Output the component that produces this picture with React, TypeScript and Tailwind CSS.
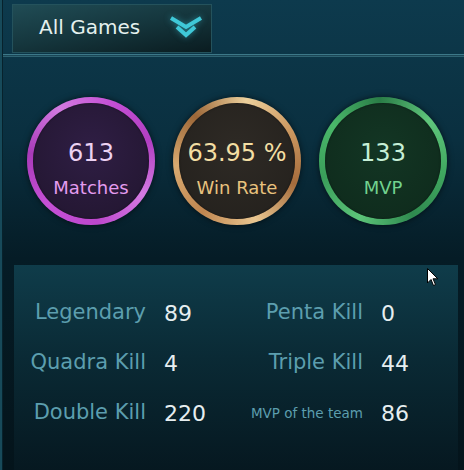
import React from "react";

const circles = [
  {
    value: "613",
    label: "Matches",
    ring: "bg-[conic-gradient(from_20deg,#c44fd4,#b23fc2,#d47ae2,#bc47cc,#c650d6,#a93ab9,#d27ae0,#c44fd4)]",
    fill: "bg-[radial-gradient(circle_at_50%_40%,#2f1e44,#21152e)]",
    num: "text-[#ecd2f2]",
    lab: "text-[#e49cef]",
  },
  {
    value: "63.95 %",
    label: "Win Rate",
    ring: "bg-[conic-gradient(from_60deg,#cc9860,#a56c3c,#e9c690,#c08650,#d9aa70,#9c6738,#ecd09c,#cc9860)]",
    fill: "bg-[radial-gradient(circle_at_50%_40%,#2e2a25,#23201c)]",
    num: "text-[#f3dea3]",
    lab: "text-[#e8c27e]",
  },
  {
    value: "133",
    label: "MVP",
    ring: "bg-[conic-gradient(from_100deg,#40a860,#2f8a4f,#5cc479,#3a9e5a,#4ab86a,#2a7d47,#60c67c,#40a860)]",
    fill: "bg-[radial-gradient(circle_at_50%_40%,#133624,#0e291b)]",
    num: "text-[#c6efd6]",
    lab: "text-[#72d28f]",
  },
];

const rows = [
  ["Legendary", "89", "Penta Kill", "0"],
  ["Quadra Kill", "4", "Triple Kill", "44"],
  ["Double Kill", "220", "MVP of the team", "86"],
];

function Chevron() {
  return (
    <svg width="34" height="22" viewBox="0 0 34 22" className="drop-shadow-[0_0_3px_rgba(60,200,220,0.5)]">
      <polyline points="2,2 17,11 32,2" fill="none" stroke="#3fc8d8" strokeWidth="4" strokeLinejoin="miter" />
      <polyline points="8,11 17,19 26,11" fill="none" stroke="#3fc8d8" strokeWidth="4" strokeLinejoin="miter" />
    </svg>
  );
}

export default function App() {
  return (
    <div className="relative w-[464px] h-[470px] overflow-hidden flex bg-[linear-gradient(180deg,#0d3a4d_0%,#0a2f3f_30%,#051c26_55%,#04141b_100%)] font-['DejaVu_Sans',sans-serif]">
      <div className="w-[3px] shrink-0 bg-[#174a5a] border-r border-[#07222c]" />

      <div className="flex-1 flex flex-col">
        {/* dropdown */}
        <div className="pl-[9px] pt-[4px]">
          <div className="w-[200px] h-[49px] flex items-center justify-between pl-[26px] pr-[8px] pb-[4px] border border-[#24525c] bg-[linear-gradient(170deg,#204c55_0%,#15363d_50%,#0a1c20_100%)]">
            <span className="text-[20px] leading-[24px] text-[#e4f0ee]">All Games</span>
            <Chevron />
          </div>
        </div>

        <div className="mt-[1px] h-[1px] bg-[#3c7888]" />
        <div className="h-[1px] bg-[#1b4656]" />
        <div className="h-[1px] bg-[#2e6372]" />

        {/* circles */}
        <div className="mt-[40px] pl-[24px] flex gap-[18px]">
          {circles.map((c) => (
            <div
              key={c.label}
              className={`w-[128px] h-[128px] rounded-full p-[6px] shadow-[0_0_6px_rgba(0,0,0,0.6)] ${c.ring}`}
            >
              <div className={`w-full h-full rounded-full flex flex-col items-center pt-[36px] shadow-[inset_0_0_2px_rgba(0,0,0,0.6)] ${c.fill}`}>
                <span className={`text-[24px] leading-[28px] ${c.num}`}>{c.value}</span>
                <span className={`mt-[10px] text-[18px] leading-[22px] ${c.lab}`}>{c.label}</span>
              </div>
            </div>
          ))}
        </div>

        {/* stats panel */}
        <div className="mt-[40px] ml-[11px] w-[444px] flex-1 pt-[23px] bg-[linear-gradient(180deg,#0f3c4a_0%,#0a2a35_45%,#061820_100%)]">
          {rows.map((r) => (
            <div key={r[0]} className="h-[50px] flex items-center">
              <div className="w-[222px] flex items-center">
                <span className="w-[132px] text-right text-[21px] text-[#5c9eae]">{r[0]}</span>
                <span className="ml-[18px] text-[22px] text-[#e6eef0]">{r[1]}</span>
              </div>
              <div className="flex items-center">
                <span
                  className={`w-[127px] text-right text-[#5c9eae] ${
                    r[2] === "MVP of the team" ? "text-[13.5px]" : "text-[21px]"
                  }`}
                >
                  {r[2]}
                </span>
                <span className="ml-[18px] text-[22px] text-[#e6eef0]">{r[3]}</span>
              </div>
            </div>
          ))}
        </div>
      </div>

      {/* mouse cursor */}
      <svg className="absolute left-[427px] top-[268px]" width="12" height="19" viewBox="0 0 12 19">
        <path d="M0.5 0.5 L0.5 15 L4 11.5 L6.5 17.5 L8.5 16.6 L6 10.8 L10.8 10.8 Z" fill="#fff" stroke="#000" strokeWidth="1" />
      </svg>
    </div>
  );
}
